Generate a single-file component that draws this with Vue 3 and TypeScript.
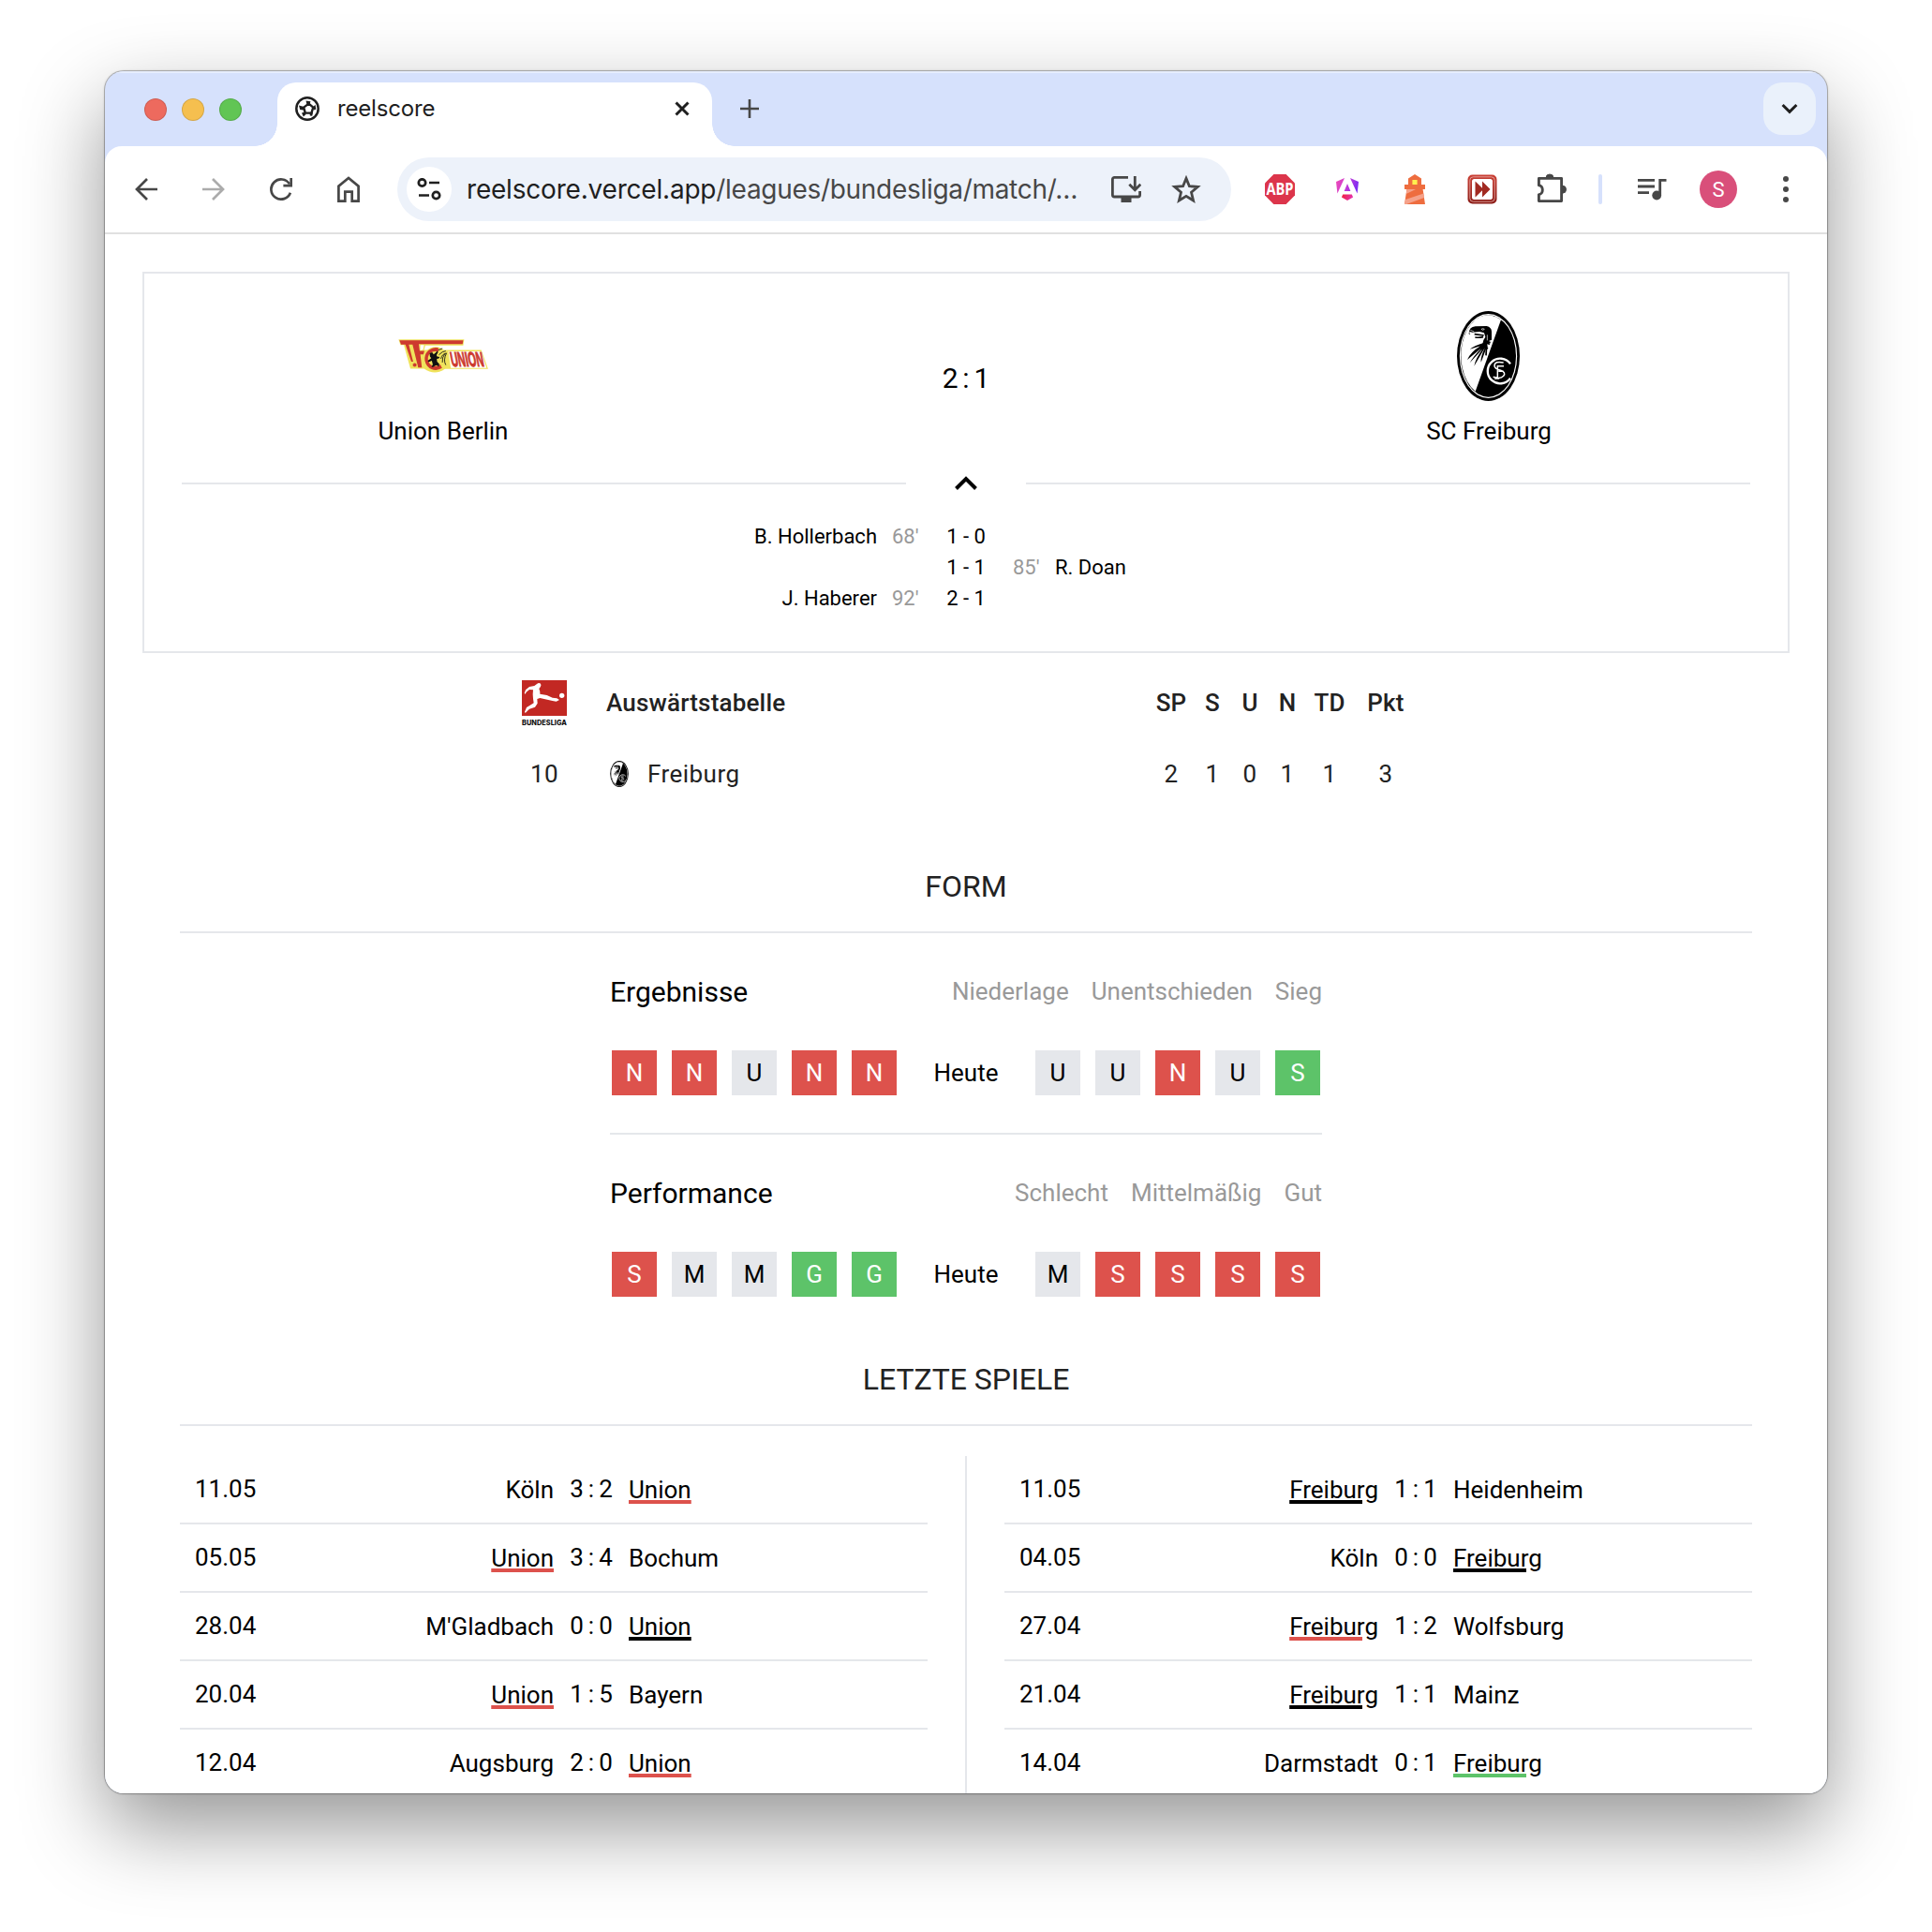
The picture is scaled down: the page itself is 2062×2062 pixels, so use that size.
<script setup lang="ts">
type Mark = 'win' | 'draw' | 'loss'
interface Match {
  date: string
  home: string
  score: string
  away: string
  side: 'home' | 'away'
  result: Mark
}
interface FormBlock {
  title: string
  legend: string[]
  before: string
  after: string
}

const goals = [
  { home: 'B. Hollerbach', homeMin: "68'", score: '1 - 0', awayMin: '', away: '' },
  { home: '', homeMin: '', score: '1 - 1', awayMin: "85'", away: 'R. Doan' },
  { home: 'J. Haberer', homeMin: "92'", score: '2 - 1', awayMin: '', away: '' },
]

const results: FormBlock = {
  title: 'Ergebnisse',
  legend: ['Niederlage', 'Unentschieden', 'Sieg'],
  before: 'NNUNN',
  after: 'UUNUS',
}
const performance: FormBlock = {
  title: 'Performance',
  legend: ['Schlecht', 'Mittelmäßig', 'Gut'],
  before: 'SMMGG',
  after: 'MSSSS',
}
const blocks = [
  { ...results, marks: { N: 'loss', U: 'draw', S: 'win' } as Record<string, Mark> },
  { ...performance, marks: { S: 'loss', M: 'draw', G: 'win' } as Record<string, Mark> },
]

const lastMatches: Match[][] = [
  [
    { date: '11.05', home: 'Köln', score: '3:2', away: 'Union', side: 'away', result: 'loss' },
    { date: '05.05', home: 'Union', score: '3:4', away: 'Bochum', side: 'home', result: 'loss' },
    { date: '28.04', home: "M'Gladbach", score: '0:0', away: 'Union', side: 'away', result: 'draw' },
    { date: '20.04', home: 'Union', score: '1:5', away: 'Bayern', side: 'home', result: 'loss' },
    { date: '12.04', home: 'Augsburg', score: '2:0', away: 'Union', side: 'away', result: 'loss' },
  ],
  [
    { date: '11.05', home: 'Freiburg', score: '1:1', away: 'Heidenheim', side: 'home', result: 'draw' },
    { date: '04.05', home: 'Köln', score: '0:0', away: 'Freiburg', side: 'away', result: 'draw' },
    { date: '27.04', home: 'Freiburg', score: '1:2', away: 'Wolfsburg', side: 'home', result: 'loss' },
    { date: '21.04', home: 'Freiburg', score: '1:1', away: 'Mainz', side: 'home', result: 'draw' },
    { date: '14.04', home: 'Darmstadt', score: '0:1', away: 'Freiburg', side: 'away', result: 'win' },
  ],
]
</script>

<template>
  <div class="desktop">
    <div class="window">
      <header class="tabstrip">
        <div class="lights"><i class="red"></i><i class="yellow"></i><i class="green"></i></div>
        <div class="tab">
          <svg class="favicon" viewBox="0 0 26 26" width="26" height="26">
            <circle cx="13" cy="13" r="11.7" fill="none" stroke="#1f1f1f" stroke-width="2.5" />
            <path d="M14.500 7.600 19.300 11.600 17.400 17.600H10.800L9.200 11.600Z" fill="none" stroke="#1f1f1f" stroke-width="2.400" stroke-linejoin="round" />
            <path d="M11.500 4.600l5 .6-1 3-3 .6ZM4 9.400l5.600 1.600-.8 3.400L5.200 14ZM21.500 8.800l-2.600 2.600 1.600 3 1.800-1ZM7 17.600l3.600-1 .8 2.600-2.600 2.400ZM15.600 17l3.400.2-.8 3.600-2.400-.4Z" fill="#1f1f1f" />
          </svg>
          <span class="tab-title">reelscore</span>
          <svg class="close" viewBox="0 0 16 16" width="16" height="16">
            <path d="M1.500 1.500l13 13M14.500 1.500l-13 13" stroke="#1f1f1f" stroke-width="3" />
          </svg>
        </div>
        <svg class="plus" viewBox="0 0 20 20" width="20" height="20">
          <path d="M10 0v20M0 10h20" stroke="#474747" stroke-width="2.600" />
        </svg>
        <div class="tab-menu">
          <svg viewBox="0 0 18 12" width="18" height="12">
            <path d="M1.600 2 9 9.400 16.400 2" fill="none" stroke="#1f1f1f" stroke-width="3" />
          </svg>
        </div>
      </header>

      <nav class="toolbar">
        <div class="tool">
          <svg viewBox="0 0 24 24" width="24" height="24" fill="none" stroke="#474747" stroke-width="2.700">
            <path d="M24 12H2M13 1 2 12l11 11" />
          </svg>
        </div>
        <div class="tool">
          <svg viewBox="0 0 24 24" width="24" height="24" fill="none" stroke="#ababab" stroke-width="2.700">
            <path d="M0 12h22M11 1l11 11-11 11" />
          </svg>
        </div>
        <div class="tool">
          <svg viewBox="0 0 24 24" width="24" height="24" fill="none" stroke="#474747" stroke-width="2.700">
            <path d="M21.900 15.800A10.600 10.600 0 1 1 21 6.400" />
            <path d="M22.700 0V8.200H14.400" />
          </svg>
        </div>
        <div class="tool">
          <svg viewBox="0 0 24 28" width="24" height="28" fill="none" stroke="#474747" stroke-width="2.700">
            <path d="M1.400 26.600V10.600L12 2l10.600 8.600v16h-6.900v-10H8.300v10Z" />
          </svg>
        </div>

        <div class="omnibox">
          <div class="site-info">
            <svg viewBox="0 0 26 24" width="26" height="24" fill="none" stroke="#1f1f1f" stroke-width="2.700">
              <circle cx="5.500" cy="5" r="3.700" /><path d="M13 5h11" />
              <circle cx="20.500" cy="18.500" r="3.700" /><path d="M2 18.500h11" />
            </svg>
          </div>
          <div class="url">reelscore.vercel.app<span>/leagues/bundesliga/match/…</span></div>
          <svg class="install" viewBox="0 0 32 28" width="32" height="28">
            <path d="M18 1.400H3.400a2 2 0 0 0-2 2V20a2 2 0 0 0 2 2H28.600a2 2 0 0 0 2-2V16" fill="none" stroke="#474747" stroke-width="2.800" />
            <path d="M10.500 22h11v6h-11Z" fill="#474747" />
            <path d="M25.300 0V14M19.300 8.700l6 6 6-6" fill="none" stroke="#474747" stroke-width="2.800" />
          </svg>
          <svg class="star" viewBox="0 0 32 30" width="32" height="30">
            <path d="M16 3.400 19.400 11.700 28.300 12.400 21.500 18.200 23.600 27 16 22.300 8.400 27l2.100-8.800-6.800-5.800 8.900-.7Z" fill="none" stroke="#474747" stroke-width="2.800" />
          </svg>
        </div>

        <div class="tool">
          <svg viewBox="0 0 32 32" width="32" height="32">
            <path d="M9.400 0h13.200L32 9.400v13.200L22.600 32H9.400L0 22.600V9.400Z" fill="#dc354b" />
            <text x="16" y="22" class="abp" text-anchor="middle" textLength="29" lengthAdjust="spacingAndGlyphs">ABP</text>
          </svg>
        </div>
        <div class="tool">
          <svg viewBox="0 0 24 24" width="24" height="24">
            <defs>
              <linearGradient id="ng" x1="0" y1="0" x2="24" y2="8" gradientUnits="userSpaceOnUse">
                <stop offset="0" stop-color="#f04bb4" /><stop offset=".5" stop-color="#c83bd6" /><stop offset="1" stop-color="#7a2df4" />
              </linearGradient>
              <linearGradient id="ng2" x1="6" y1="18" x2="18" y2="24" gradientUnits="userSpaceOnUse">
                <stop offset="0" stop-color="#f0203c" /><stop offset="1" stop-color="#e535c0" />
              </linearGradient>
            </defs>
            <path d="M9 0 1.400 16.400 0 4ZM15 0 24 4l-1.400 12.400ZM12 6l3.400 8H8.600Z" fill="url(#ng)" />
            <path d="M7.200 17.500h9.600l1.300 3L12 24l-6.100-3.500Z" fill="url(#ng2)" />
          </svg>
        </div>
        <div class="tool">
          <svg viewBox="0 0 22 32" width="22" height="32">
            <path d="M11 0 18 4.500V11h4v5h-2.400L22 32H0L2.400 16H0V11h4V4.500Z" fill="#ee6d3f" />
            <path d="M8.400 6h5.200v5H8.400Z" fill="#fff04f" />
            <path d="M2.400 16 12 16 1.800 21ZM1 27 20.400 20.600 21 25 2 32H0Z" fill="#f5a28b" />
          </svg>
        </div>
        <div class="tool">
          <svg viewBox="0 0 32 32" width="32" height="32">
            <defs>
              <linearGradient id="ff" x1="0" y1="0" x2="0" y2="1">
                <stop offset="0" stop-color="#cb4035" /><stop offset="1" stop-color="#8a1c17" />
              </linearGradient>
            </defs>
            <rect x=".5" y=".5" width="31" height="31" rx="5" fill="url(#ff)" />
            <rect x="2.800" y="2.800" width="26.400" height="26.400" rx="3.500" fill="none" stroke="#e8b5b0" stroke-width=".8" />
            <rect x="5" y="5" width="22" height="22" rx="2.500" fill="#fff" />
            <path d="M8.500 7.500 16 14.800V7.500L24.500 16 16 24.500V17.200L8.500 24.500Z" fill="#a12a22" />
          </svg>
        </div>
        <div class="tool">
          <svg viewBox="0 0 32 34" width="32" height="34" class="puzzle">
            <path d="M2.400 6.400H26.600V30.600H2.400V23.600C7.600 23.300 7.600 14 2.400 13.700Z" fill="none" stroke="#474747" stroke-width="2.900" stroke-linejoin="round" />
            <path d="M10 6a4 4 0 0 1 8 0ZM27.500 14.200a4 4 0 0 1 0 8Z" fill="#474747" stroke="#474747" />
          </svg>
        </div>
        <div class="sep"></div>
        <div class="tool">
          <svg viewBox="0 0 32 24" width="32" height="24" class="queue">
            <path d="M1 2.300h18M1 9h18M1 15.700h12" stroke="#474747" stroke-width="2.800" />
            <path d="M24.700 18.500V2.300H31.500" fill="none" stroke="#474747" stroke-width="2.800" />
            <circle cx="21.200" cy="18.500" r="4.900" fill="#474747" />
          </svg>
        </div>
        <div class="tool"><div class="avatar">S</div></div>
        <div class="tool">
          <svg viewBox="0 0 6 28" width="6" height="28" fill="#474747">
            <circle cx="3" cy="3" r="3" /><circle cx="3" cy="14" r="3" /><circle cx="3" cy="25" r="3" />
          </svg>
        </div>
      </nav>

      <main class="page">
        <svg class="symbols" width="0" height="0">
          <symbol id="crest" viewBox="225 66 201 288">
            <ellipse cx="325.500" cy="210" rx="100.500" ry="144" fill="#000" />
            <ellipse cx="325.500" cy="210" rx="92" ry="135" fill="#fff" />
            <ellipse cx="325.500" cy="210" rx="88.500" ry="131" fill="#000" />
            <path d="M366 94A86 128.500 0 1 0 284 323Z" fill="#fff" />
            <path d="M264 134q0-16 20-19l36-1q16 4 16 18v26l-8 3 2 14-8-3v14l-10-4-5 10-9-6-1-6 10-9 3-12 6-10-4-13-14-4-24 2-8-2q-4 4 2 9-8-1-4-7Z" fill="#000" />
            <path d="M281 140l30 4M283 150q12 2 26-1M318 164l14 3M308 176l16 10M320 176l-2 32" fill="none" stroke="#000" stroke-width="5" />
            <path d="M310 168Q282 176 266 188L300 178Q268 198 258 222L306 182Q276 212 266 232L310 184Q284 218 280 242L314 184Q300 214 302 230L320 182Z" fill="#000" />
            <path d="M303 124q5-4 10 0-5 6-10 0M322 142v18M268 127l12 5" stroke="#fff" stroke-width="2" fill="none" />
            <path d="M396 235A40 40 0 1 0 396 281" fill="none" stroke="#fff" stroke-width="7" />
            <path d="M374 231q-28-6-29 10 0 10 20 15 18 6 9 18-10 11-33 3M355 240v42M355 242h20M345 282h16M358 259h16" fill="none" stroke="#fff" stroke-width="4.500" />
          </symbol>
        </svg>

        <section class="card">
          <div class="head">
            <div class="team">
              <div class="crest-box">
                <svg viewBox="135 125 289 110" width="96" height="36.500" class="union-logo">
                  <path d="M136 126H347L344 145H222L218 160H402L424 221H285Q252 244 218 220H174L153 144H142Z" fill="#f0e35c" />
                  <path d="M296 164H401L419 218H304Z" fill="#fff" />
                  <path d="M206 144h12l-3 15-9 2Z" fill="#fff" />
                  <path d="M139 129H344L342 141H201L204 163H219L216 174H206L211 216H199L181 142H169L183 197H177L158 142H144Z" fill="#cd3a2e" />
                  <circle cx="188" cy="208" r="7" fill="#cd3a2e" stroke="#f0e35c" stroke-width="2" />
                  <circle cx="255" cy="190" r="40" fill="#f0e35c" />
                  <path d="M264 153A36 36 0 1 0 276 218L270 206A24 24 0 1 1 264 166Z" fill="#cd3a2e" />
                  <path d="M236 170l8-3 5 7 6-5 6-6 2 4-5 9 2 5 8 1-2 5-7 1 1 9 7 8-2 9-6-5-5 1-7 5h-5l4-9-3-12-11 5-2-5 11-8-4-5Z" fill="#111" />
                  <path d="M264 160l13-5M266 175q12-12 22-12M272 188q4-16 18-18M277 200q-2-16 8-28M288 208q-9-15 2-38" fill="none" stroke="#111" stroke-width="2.600" />
                  <text class="union" transform="translate(307 213) skewX(11)" textLength="106" lengthAdjust="spacingAndGlyphs">UNION</text>
                </svg>
              </div>
              <div class="team-name">Union Berlin</div>
            </div>
            <div class="score">2:1</div>
            <div class="team">
              <div class="crest-box"><svg width="67" height="96" class="big-crest"><use href="#crest" /></svg></div>
              <div class="team-name">SC Freiburg</div>
            </div>
          </div>
          <div class="fold">
            <hr />
            <svg viewBox="0 0 24 16" width="24" height="16">
              <path d="M1.500 13.500 12 3l10.500 10.500" fill="none" stroke="#000" stroke-width="4" />
            </svg>
            <hr />
          </div>
          <div v-for="goal in goals" :key="goal.score" class="goal">
            <span class="scorer-home">{{ goal.home }}</span>
            <span class="minute">{{ goal.homeMin }}</span>
            <span class="tally">{{ goal.score }}</span>
            <span class="minute">{{ goal.awayMin }}</span>
            <span class="scorer-away">{{ goal.away }}</span>
          </div>
        </section>

        <section class="standings">
          <div class="line heading">
            <span class="rank">
              <svg viewBox="81 78 144 144" width="48" height="48" class="league-logo">
                <path d="M81 78H225V192H81Z" fill="#c22823" />
                <path d="M129 90q6-6 12-1 3 5-1 11l-4 5q4 9 3 17l22 4 18 8 14 2 8 5-10 5-12-2-40-9-9 3 1 14-8 12-18 6-7 7-6 6-2-4 6-14 10-6 13-8-2-14-1-14 1-14-12-1-10 8-3 6-3-2 4-11 12-10 16-3Z" fill="#fff" />
                <circle cx="209" cy="127" r="8" fill="#fff" />
                <text class="bl" x="81" y="221" textLength="144" lengthAdjust="spacingAndGlyphs">BUNDESLIGA</text>
              </svg>
            </span>
            <span class="club">Auswärtstabelle</span>
            <span class="c1">SP</span><span class="c2">S</span><span class="c3">U</span><span class="c3">N</span>
            <span class="c4">TD</span><span class="c5">Pkt</span>
          </div>
          <div class="line">
            <span class="rank">10</span>
            <span class="club"><svg width="20" height="28"><use href="#crest" /></svg>Freiburg</span>
            <span class="c1">2</span><span class="c2">1</span><span class="c3">0</span><span class="c3">1</span>
            <span class="c4">1</span><span class="c5">3</span>
          </div>
        </section>

        <h2 class="form-title">FORM</h2>
        <section class="form">
          <div v-for="block in blocks" :key="block.title" class="block">
            <div class="block-head">
              <h3>{{ block.title }}</h3>
              <ul><li v-for="entry in block.legend" :key="entry">{{ entry }}</li></ul>
            </div>
            <div class="marks">
              <div class="run"><b v-for="(m, i) in block.before" :key="i" :class="block.marks[m]">{{ m }}</b></div>
              <span class="today">Heute</span>
              <div class="run"><b v-for="(m, i) in block.after" :key="i" :class="block.marks[m]">{{ m }}</b></div>
            </div>
          </div>
        </section>

        <h2>LETZTE SPIELE</h2>
        <section class="history">
          <div v-for="(list, n) in lastMatches" :key="n" class="list">
            <div v-for="match in list" :key="match.date" class="match">
              <div class="first">
                <span class="date">{{ match.date }}</span>
                <span class="name" :class="match.side === 'home' && ['own', 'u-' + match.result]">{{ match.home }}</span>
              </div>
              <span class="result">{{ match.score }}</span>
              <span class="name" :class="match.side === 'away' && ['own', 'u-' + match.result]">{{ match.away }}</span>
            </div>
          </div>
        </section>
      </main>
    </div>
  </div>
</template>

<style>
body { background: #fff; overflow: hidden; }
</style>

<style scoped>
* { box-sizing: border-box; }
svg { display: block; flex: none; }
.desktop {
  width: 2062px;
  height: 2062px;
  padding: 76px 112px 148px;
  background: #fff;
  overflow: hidden;
  font-family: Roboto, sans-serif;
  font-size: 26px;
}
.window {
  height: 1838px;
  border-radius: 20px;
  box-shadow: 0 0 0 1px rgba(0, 0, 0, .22), 0 0 3px rgba(0, 0, 0, .25), 0 36px 88px rgba(0, 0, 0, .42);
  background: #d6e1fc;
  overflow: hidden;
  display: flex;
  flex-direction: column;
}
.tabstrip {
  height: 80px;
  flex: none;
  display: flex;
  padding: 12px 12px 0 42px;
  box-shadow: inset 0 2px 0 #e6edfd;
}
.lights { display: flex; gap: 16px; padding-top: 17px; width: 142px; }
.lights i { width: 24px; height: 24px; border-radius: 50%; border: 1px solid rgba(0, 0, 0, .13); }
.red { background: #ed6a5e; }
.yellow { background: #f5bf4f; }
.green { background: #61c554; }
.tab {
  position: relative;
  width: 464px;
  height: 68px;
  padding: 0 24px 12px 19px;
  border-radius: 20px 20px 0 0;
  background: #fff;
  display: flex;
  align-items: center;
}
.tab::before, .tab::after {
  content: '';
  position: absolute;
  bottom: 0;
  width: 24px;
  height: 24px;
}
.tab::before { left: -24px; background: radial-gradient(circle at 0 0, transparent 23.5px, #fff 24px); }
.tab::after { right: -24px; background: radial-gradient(circle at 100% 0, transparent 23.5px, #fff 24px); }
.tab-title {
  margin-left: 19px;
  font: 24px/30px Inter, sans-serif;
  letter-spacing: -.18px;
  color: #1f1f1f;
}
.close { margin-left: auto; }
.plus { margin: 18px 0 0 30px; }
.tab-menu {
  margin-left: auto;
  width: 56px;
  height: 56px;
  border-radius: 20px;
  background: #eaf1fb;
  display: flex;
  align-items: center;
  justify-content: center;
}
.toolbar {
  height: 94px;
  flex: none;
  background: #fff;
  border-radius: 18px 18px 0 0;
  border-bottom: 2px solid #e0e0e0;
  display: flex;
  align-items: center;
  padding-left: 8px;
}
.tool { width: 72px; flex: none; display: flex; justify-content: center; }
.puzzle { margin: -3px 0 0 4px; }
.queue { margin-left: 2px; }
.omnibox {
  margin: 0 16px;
  width: 890px;
  height: 68px;
  flex: none;
  border-radius: 34px;
  background: #edf2fa;
  display: flex;
  align-items: center;
  padding-left: 10px;
}
.site-info {
  width: 48px;
  height: 48px;
  border-radius: 50%;
  background: #fff;
  display: flex;
  align-items: center;
  justify-content: center;
}
.url {
  width: 704px;
  padding-left: 16px;
  white-space: nowrap;
  font: 28px/40px Inter, sans-serif;
  letter-spacing: -.2px;
  color: #1f1f1f;
}
.url span { color: #474747; letter-spacing: -.3px; }
.star { margin-left: 32px; }
.abp { font: bold 17px "Open Sans", sans-serif; fill: #fff; }
.sep { width: 4px; height: 32px; margin: 0 16px; border-radius: 2px; background: #d6e1fc; flex: none; }
.avatar {
  width: 40px;
  height: 40px;
  border-radius: 50%;
  background: #d94f7a;
  color: #fff;
  text-align: center;
  font-size: 22px;
  line-height: 41px;
}
.page { flex: 1; background: #fff; padding: 40px; color: #000; }
.symbols { position: absolute; }
.card { height: 407px; border: 2px solid #e5e7eb; padding: 40px; }
.head { display: grid; grid-template-columns: 1fr 1fr 1fr; align-items: center; height: 146px; }
.team { display: flex; flex-direction: column; align-items: center; }
.crest-box { height: 96px; display: flex; align-items: center; }
.union-logo, .league-logo { overflow: visible; }
.big-crest { margin-right: 1px; }
.union { font: bold 66px/1 "Liberation Sans", sans-serif; fill: #cd3a2e; stroke: #cd3a2e; stroke-width: 3px; }
.bl { font: 800 22px/1 Inter, sans-serif; fill: #111; }
.team-name { margin-top: 14px; line-height: 36px; }
.score { text-align: center; font-size: 30px; letter-spacing: 4.8px; text-indent: 4.8px; margin-bottom: 3px; }
.fold { margin-top: 14px; height: 48px; display: flex; align-items: center; justify-content: space-between; }
.fold hr { width: 773px; margin: 0; border: 0; border-top: 2px solid #e5e7eb; }
.goal {
  height: 33px;
  line-height: 33px;
  font-size: 22px;
  display: grid;
  grid-template-columns: 742px 65px 60px 65px 1fr;
}
.fold + .goal { margin-top: 16px; }
.scorer-home { text-align: right; }
.minute { color: #999; padding-left: 16px; }
.tally { text-align: center; }
.tally + .minute { padding-left: 20px; }
.standings { margin: 15px 0 0 365px; color: #222; }
.line { display: flex; align-items: center; height: 76px; letter-spacing: .46px; text-align: center; }
.heading { font-weight: 500; letter-spacing: .19px; }
.rank { width: 128px; display: flex; justify-content: center; }
.club { width: 583px; display: flex; align-items: center; padding-left: 2px; }
.line:not(.heading) .club { padding-left: 6px; gap: 20px; }
.c1 { width: 44px; }
.c2 { width: 44px; }
.c3 { width: 40px; }
.c2 + .c3 { margin-left: -2px; }
.c4 { width: 46px; margin-left: 2px; }
.c5 { width: 70px; margin-left: 2px; }
h2 {
  margin: 0 40px;
  height: 98px;
  line-height: 96px;
  font-size: 32px;
  font-weight: 400;
  text-align: center;
  color: #222;
  border-bottom: 2px solid #e5e7eb;
}
.form-title { margin-top: 34px; }
.form { width: 760px; margin: 0 auto; }
.block { padding: 32px 0 40px; }
.block + .block { border-top: 2px solid #e5e7eb; }
.block-head { height: 60px; display: flex; align-items: center; justify-content: space-between; }
h3 { margin: 0; font-size: 30px; font-weight: 400; }
ul { display: flex; gap: 24px; margin: 0; padding: 0; list-style: none; color: #999; }
.marks { margin: 33px 2px 0; display: flex; justify-content: space-between; align-items: center; }
.run { display: flex; gap: 16px; }
.run b { width: 48px; height: 48px; line-height: 48px; font-weight: 400; text-align: center; }
.loss { background: #dd524c; color: #fff; }
.win { background: #5dc369; color: #fff; }
.draw { background: #e5e7eb; }
.history { margin: 32px 40px 0; display: flex; }
.list { width: 838px; padding-right: 40px; height: 400px; }
.list + .list { border-left: 2px solid #e5e7eb; width: 840px; padding: 0 0 0 40px; }
.match {
  display: grid;
  grid-template-columns: 399px 80px 1fr;
  height: 73px;
  line-height: 71px;
  border-bottom: 2px solid #e5e7eb;
}
.first { display: flex; justify-content: space-between; padding-left: 16px; }
.name { position: relative; top: 1px; }
.result { text-align: center; letter-spacing: 5px; text-indent: 5px; }
.own { text-decoration: underline 4px; text-underline-offset: 2px; }
.u-loss { text-decoration-color: #dd524c; }
.u-draw { text-decoration-color: #000; }
.u-win { text-decoration-color: #5dc369; }
</style>
